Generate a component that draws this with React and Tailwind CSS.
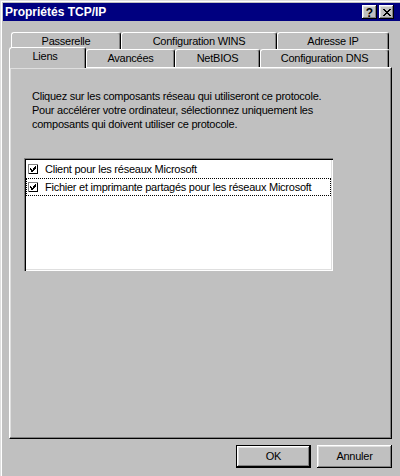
import React from "react";

function CapBtn({ children }) {
  return (
    <div className="w-[15px] h-[14px] bg-[#c0c0c0] flex items-center justify-center shadow-[inset_-1px_-1px_#000,inset_1px_1px_#fff,inset_-2px_-2px_#808080,inset_2px_2px_#dfdfdf]">
      {children}
    </div>
  );
}

function Check() {
  return (
    <svg width="10" height="10" viewBox="0 0 10 10" shapeRendering="crispEdges" className="shrink-0">
      <rect x="0" y="0" width="10" height="10" fill="#808080" />
      <rect x="1" y="1" width="9" height="9" fill="#000" />
      <rect x="1" y="1" width="8" height="8" fill="#fff" />
      <path
        fill="#000"
        d="M7 2h1v1H7z M6 3h2v1H6z M2 4h1v1H2z M5 4h3v1H5z M2 5h2v1H2z M5 5h2v1H5z M3 6h3v1H3z M3 7h2v1H3z M4 7h1v1H4z"
      />
    </svg>
  );
}

function Tab({ className, children }) {
  return (
    <div
      className={
        "flex items-center justify-center whitespace-nowrap bg-[#c0c0c0] border-l border-t border-r border-l-white border-t-white border-r-black rounded-tl-[3px] rounded-tr-[3px] shadow-[inset_-1px_0_#808080] " +
        className
      }
    >
      {children}
    </div>
  );
}

export default function App() {
  return (
    <div className="w-[400px] h-[476px] bg-[#c0c0c0] overflow-hidden text-black text-[11px] leading-[13px] tracking-[-0.25px] font-['Liberation_Sans',Arial,sans-serif] shadow-[inset_1px_1px_#dfdfdf,inset_2px_2px_#fff] pt-[3px]">
      {/* title bar */}
      <div className="ml-[3px] h-[18px] bg-[#000080] flex items-center justify-between pl-[2px] pr-[6px]">
        <span className="text-white font-bold text-[12px] leading-[14px] tracking-normal">
          Propriétés TCP/IP
        </span>
        <div className="flex gap-[2px]">
          <CapBtn>
            <span className="font-bold text-[12px] leading-none tracking-normal mt-[1px]">?</span>
          </CapBtn>
          <CapBtn>
            <svg width="8" height="7" viewBox="0 0 8 7" shapeRendering="crispEdges">
              <path
                fill="#000"
                d="M0 0h2v1H0z M6 0h2v1H6z M1 1h2v1H1z M5 1h2v1H5z M2 2h4v1H2z M3 3h2v1H3z M2 4h4v1H2z M1 5h2v1H1z M5 5h2v1H5z M0 6h2v1H0z M6 6h2v1H6z"
              />
            </svg>
          </CapBtn>
        </div>
      </div>

      {/* tabs row 1 */}
      <div className="mt-[11px] ml-[11px] flex h-[17px]">
        <Tab className="w-[110px] h-[17px]">Passerelle</Tab>
        <Tab className="w-[156px] h-[17px]">Configuration WINS</Tab>
        <Tab className="w-[112px] h-[17px]">Adresse IP</Tab>
      </div>

      {/* tabs row 2 */}
      <div className="-mt-[2px] ml-[9px] flex items-end h-[20px]">
        <Tab className="relative z-10 w-[77px] h-[21px] -mb-px pb-[3px] pr-[5px]">Liens</Tab>
        <Tab className="w-[89px] h-[18px]">Avancées</Tab>
        <Tab className="w-[85px] h-[18px]">NetBIOS</Tab>
        <Tab className="w-[129px] h-[18px]">Configuration DNS</Tab>
      </div>

      {/* panel */}
      <div className="ml-[9px] w-[383px] h-[372px] border-l border-t border-r border-b border-l-white border-t-white border-r-black border-b-black shadow-[inset_-1px_-1px_#808080,inset_1px_1px_#dfdfdf] pt-[21px]">
        <p className="pl-[22px] leading-[14px] whitespace-nowrap">
          Cliquez sur les composants réseau qui utiliseront ce protocole.
          <br />
          Pour accélérer votre ordinateur, sélectionnez uniquement les
          <br />
          composants qui doivent utiliser ce protocole.
        </p>

        <div className="ml-[14px] mt-[27px] w-[309px] h-[113px] bg-white p-[2px] shadow-[inset_1px_1px_#808080,inset_2px_2px_#000,inset_-1px_-1px_#fff,inset_-2px_-2px_#dfdfdf]">
          <div className="h-[18px] flex items-center pl-[2px] gap-[7px] whitespace-nowrap">
            <Check />
            <span>Client pour les réseaux Microsoft</span>
          </div>
          <div className="h-[18px] flex items-center pl-[1px] gap-[7px] whitespace-nowrap border border-dotted border-black">
            <Check />
            <span>Fichier et imprimante partagés pour les réseaux Microsoft</span>
          </div>
        </div>
      </div>

      {/* buttons */}
      <div className="ml-[9px] w-[383px] mt-[6px] flex justify-end gap-[6px]">
        <button className="w-[75px] h-[23px] border border-black bg-[#c0c0c0] flex items-center justify-center shadow-[inset_-1px_-1px_#000,inset_1px_1px_#fff,inset_-2px_-2px_#808080,inset_2px_2px_#dfdfdf]">
          OK
        </button>
        <button className="w-[75px] h-[23px] bg-[#c0c0c0] flex items-center justify-center shadow-[inset_-1px_-1px_#000,inset_1px_1px_#fff,inset_-2px_-2px_#808080,inset_2px_2px_#dfdfdf]">
          Annuler
        </button>
      </div>
    </div>
  );
}
